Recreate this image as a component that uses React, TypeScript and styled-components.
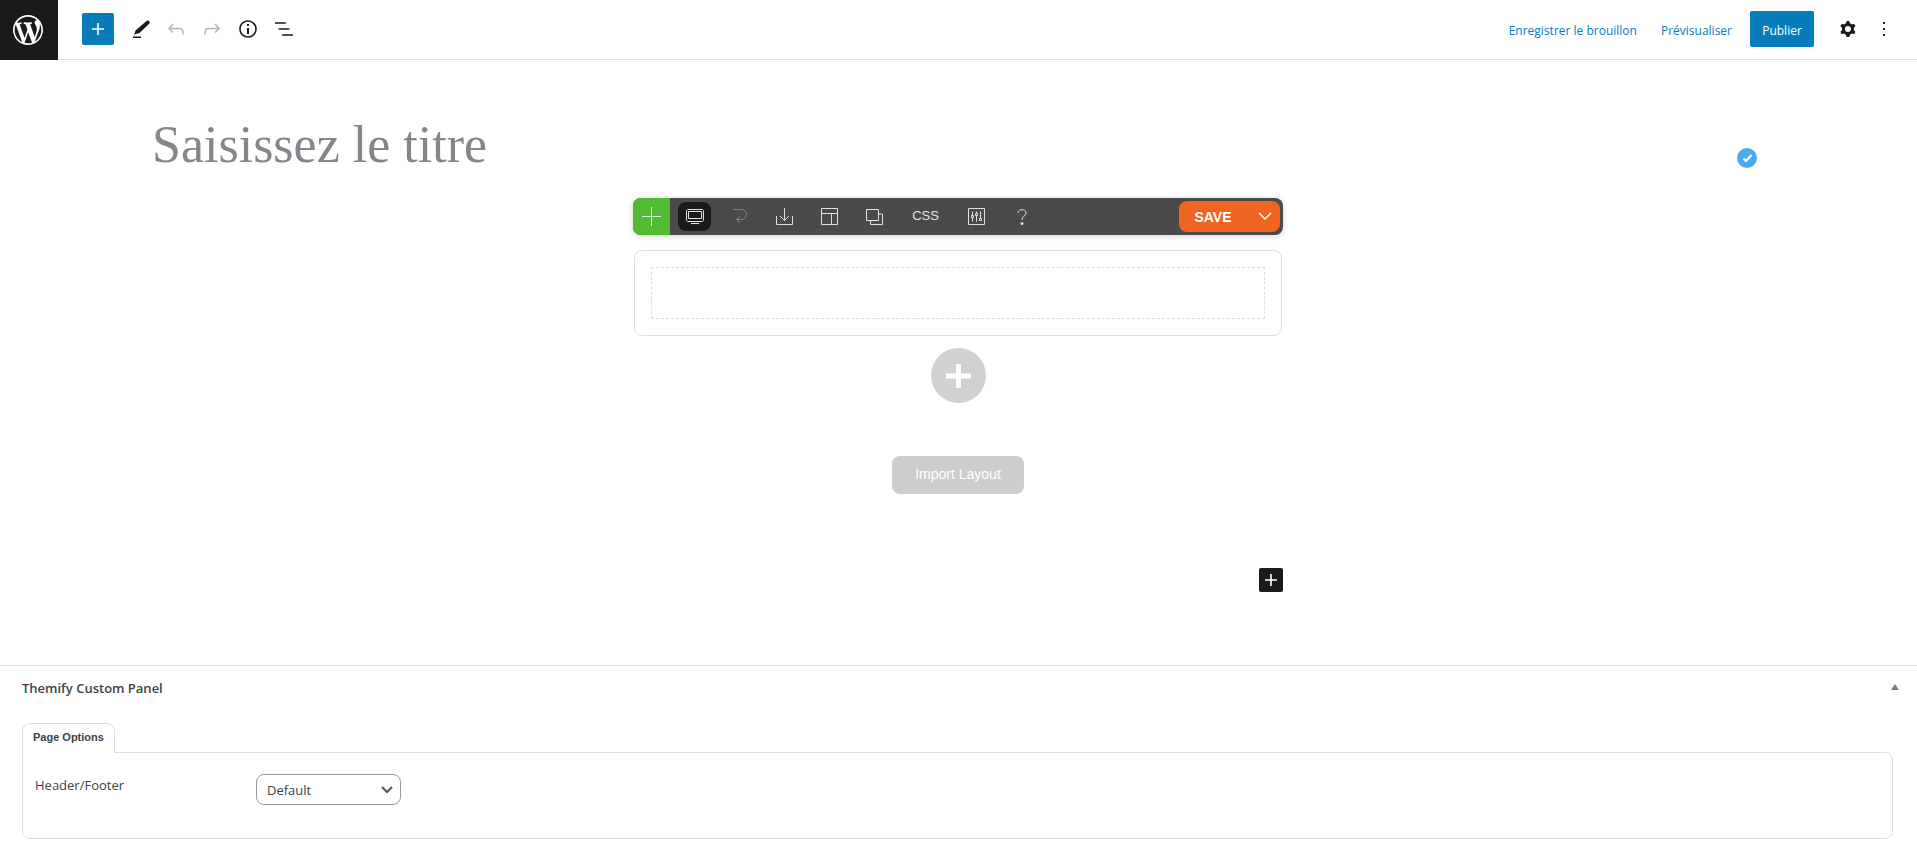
import React from "react";
import styled, { createGlobalStyle } from "styled-components";

const ui = '"Open Sans", "Noto Sans", sans-serif';
const arial = '"Liberation Sans", Arial, sans-serif';

const GlobalStyle = createGlobalStyle`
  *, *::before, *::after { box-sizing: border-box; }
  body { margin: 0; background: #fff; color: #3c434a; font-family: ${ui}; font-size: 13px; }
  button { margin: 0; padding: 0; border: 0; background: none; cursor: pointer; font: inherit; }
  svg { display: block; }
`;

const Page = styled.div`
  display: flex;
  flex-direction: column;
  min-height: 100vh;
`;

const Header = styled.header`
  display: flex;
  align-items: flex-start;
  justify-content: space-between;
  height: 60px;
  border-bottom: 1px solid #e0e0e0;
`;

const HeaderGroup = styled.div<{ $end?: boolean }>`
  display: flex;
  align-items: center;
  height: 58px;
  padding-right: ${(p) => (p.$end ? "15px" : "0")};
`;

const HomeLink = styled.a`
  display: flex;
  align-items: center;
  align-self: flex-start;
  justify-content: center;
  width: 58px;
  height: 60px;
  margin-right: 24px;
  padding-right: 2px;
  background: #1a1a1a;
  color: #fff;
`;

const InserterButton = styled.button`
  display: flex;
  align-items: center;
  justify-content: center;
  width: 32px;
  height: 32px;
  margin-right: 8px;
  border-radius: 2px;
  background: #077cba;
  color: #fff;
`;

const IconButton = styled.button`
  display: flex;
  align-items: center;
  justify-content: center;
  width: 36px;
  height: 36px;
  color: #1a1a1a;
  &:disabled { color: #b4b4b4; }
`;

const TextButton = styled.button`
  height: 36px;
  margin-right: 24px;
  padding-top: 2px;
  color: #077cba;
  font-size: 12px;
`;

const PublishButton = styled.button`
  width: 64px;
  height: 36px;
  margin: 0 16px 0 -6px;
  padding-top: 2px;
  border-radius: 2px;
  background: #077cba;
  color: #fff;
  font-size: 12px;
`;

const Editor = styled.main`
  display: flex;
  flex-direction: column;
  padding: 0 1px 73px 0;
`;

const TitleRow = styled.div`
  display: flex;
  align-items: center;
  justify-content: space-between;
  padding: 48px 159px 0 152px;
`;

const TitleInput = styled.input`
  flex: 1;
  min-width: 0;
  height: 72px;
  padding: 0;
  border: 0;
  outline: 0;
  background: none;
  color: #1e1e1e;
  font-family: "Liberation Serif", "Times New Roman", serif;
  font-size: 52px;
  &::placeholder { color: #85858b; opacity: 1; }
`;

const CheckBadge = styled.button`
  display: flex;
  align-items: center;
  justify-content: center;
  width: 20px;
  height: 20px;
  margin-top: 28px;
  border-radius: 50%;
  background: #4aaaf0;
  color: #fff;
`;

const Builder = styled.section`
  display: flex;
  flex-direction: column;
  align-items: center;
  width: 100%;
  max-width: 650px;
  margin: 18px auto 0;
`;

const Toolbar = styled.div`
  display: flex;
  align-items: center;
  justify-content: space-between;
  width: 100%;
  height: 37px;
  padding-right: 3px;
  border-radius: 8px;
  background: #4a4a4a;
  box-shadow: 0 1px 6px rgba(0, 0, 0, 0.18);
`;

const Tools = styled.div`
  display: flex;
  align-items: center;
  gap: 12px;
`;

const AddModule = styled.button`
  display: flex;
  align-items: center;
  justify-content: center;
  width: 37px;
  height: 37px;
  margin-right: -4px;
  border-radius: 8px 0 0 8px;
  background: #53ba34;
  color: #e4f3df;
`;

const Tool = styled.button<{ $active?: boolean; $wide?: boolean }>`
  display: flex;
  align-items: center;
  justify-content: center;
  width: ${(p) => (p.$wide ? "45px" : "33px")};
  height: 29px;
  padding-bottom: ${(p) => (p.$wide ? "2px" : "0")};
  border-radius: 8px;
  background: ${(p) => (p.$active ? "#1a1a1a" : "transparent")};
  color: #e0e0e0;
  font-family: ${arial};
  font-size: 13px;
  &:disabled { color: #82828a; }
`;

const SaveGroup = styled.div`
  display: flex;
  align-items: center;
  height: 31px;
  border-radius: 8px;
  background: #f16522;
  color: #fff;
`;

const SaveButton = styled.button`
  width: 68px;
  height: 31px;
  color: #fff;
  font-family: ${arial};
  font-size: 14px;
  font-weight: 700;
`;

const SaveMenu = styled.button`
  display: flex;
  align-items: center;
  justify-content: center;
  width: 33px;
  height: 31px;
  padding-left: 2px;
  color: #fff;
`;

const RowBox = styled.div`
  align-self: stretch;
  margin: 15px 1px 12px;
  padding: 16px;
  border: 1px solid #dedede;
  border-radius: 8px;
`;

const DropZone = styled.div`
  height: 52px;
  border: 1px dashed #dedede;
`;

const AddRow = styled.button`
  display: flex;
  align-items: center;
  justify-content: center;
  width: 55px;
  height: 55px;
  border-radius: 50%;
  background: #d1d1d1;
  color: #fff;
`;

const ImportButton = styled.button`
  height: 38px;
  margin: 53px 0 74px;
  padding: 0 23px 2px;
  border-radius: 8px;
  background: #cdcdcd;
  color: #fff;
  font-family: ${arial};
  font-size: 14px;
`;

const Appender = styled.button`
  display: flex;
  align-items: center;
  justify-content: center;
  align-self: flex-end;
  width: 24px;
  height: 24px;
  border-radius: 2px;
  background: #1a1a1a;
  color: #fff;
`;

const MetaBox = styled.section`
  border-top: 1px solid #e0e0e0;
  padding: 0 24px 24px 22px;
`;

const MetaHeader = styled.div`
  display: flex;
  align-items: center;
  justify-content: space-between;
  height: 44px;
  margin-right: -6px;
`;

const MetaTitle = styled.h2`
  margin: 0;
  font-size: 13px;
  font-weight: 600;
  line-height: 20px;
`;

const ToggleButton = styled.button`
  display: flex;
  padding-bottom: 2px;
  color: #787c82;
`;

const Tab = styled.button`
  display: block;
  position: relative;
  z-index: 1;
  height: 30px;
  margin: 13px 0 -1px;
  padding: 0 10px 4px;
  border: 1px solid #dedede;
  border-bottom: 0;
  border-radius: 8px 8px 0 0;
  background: #fff;
  color: #3c434a;
  font-family: ${arial};
  font-size: 11px;
  font-weight: 700;
`;

const TabPanel = styled.div`
  display: flex;
  align-items: flex-start;
  min-height: 87px;
  padding: 21px 12px;
  border: 1px solid #dedede;
  border-radius: 0 8px 8px 8px;
`;

const FieldLabel = styled.label`
  width: 221px;
  font-size: 13px;
  line-height: 22px;
`;

const SelectWrap = styled.div`
  display: grid;
  align-items: center;
  width: 145px;
  & > * { grid-area: 1 / 1; }
  & > svg { justify-self: end; margin-right: 8px; pointer-events: none; color: #555; }
`;

const Select = styled.select`
  appearance: none;
  width: 100%;
  height: 31px;
  padding: 0 24px 0 10px;
  border: 1px solid #999;
  border-radius: 8px;
  background: #fff;
  color: #3c434a;
  font-family: ${ui};
  font-size: 13px;
`;

type IconProps = { d: string; size?: number; box?: string };

const Filled = ({ d, size = 24, box = "0 0 24 24" }: IconProps) => (
  <svg width={size} height={size} viewBox={box} fill="currentColor" aria-hidden="true">
    <path fillRule="evenodd" clipRule="evenodd" d={d} />
  </svg>
);

const Line = ({ d, w = 18, h = 18, stroke = 1 }: { d: string; w?: number; h?: number; stroke?: number }) => (
  <svg width={w} height={h} viewBox={`0 0 ${w} ${h}`} fill="none" stroke="currentColor" strokeWidth={stroke} aria-hidden="true">
    <path d={d} />
  </svg>
);

const icons = {
  wordpress:
    "M20 10c0-5.51-4.49-10-10-10C4.48 0 0 4.49 0 10c0 5.52 4.48 10 10 10 5.51 0 10-4.48 10-10zM7.78 15.37L4.37 6.22c.55-.02 1.17-.08 1.17-.08.5-.06.44-1.13-.06-1.11 0 0-1.45.11-2.37.11-.18 0-.37 0-.58-.01C4.12 2.69 6.87 1.11 10 1.11c2.33 0 4.45.87 6.05 2.34-.68-.11-1.65.39-1.65 1.58 0 .74.45 1.36.9 2.1.35.61.55 1.36.55 2.46 0 1.49-1.4 5-1.4 5l-3.03-8.37c.54-.02.82-.17.82-.17.5-.05.44-1.25-.06-1.22 0 0-1.44.12-2.38.12-.87 0-2.33-.12-2.33-.12-.5-.03-.56 1.2-.06 1.22l.92.08 1.26 3.41zM17.41 10c.24-.64.74-1.87.43-4.25.7 1.29 1.05 2.71 1.05 4.25 0 3.29-1.73 6.24-4.4 7.78.97-2.59 1.94-5.2 2.92-7.78zM6.1 18.09C3.12 16.65 1.11 13.53 1.11 10c0-1.3.23-2.48.72-3.59C3.25 10.3 4.67 14.2 6.1 18.09zm4.03-6.63l2.58 6.98c-.86.29-1.76.45-2.71.45-.79 0-1.57-.11-2.29-.33.81-2.38 1.62-4.74 2.42-7.1z",
  plus: "M18 11.2h-5.2V6h-1.6v5.2H6v1.6h5.2V18h1.6v-5.2H18z",
  pencil: "M18.800 3.800Q20.200 2.800 21.300 4.200Q22.300 5.500 21.200 6.700L11.500 16L6.200 17.600L7.500 13.500ZM5 19.500H13V21H5Z",
  undo: "M18.3 11.7c-.6-.6-1.4-.9-2.3-.9H6.7l2.9-3.3-1.1-1-4.5 5L8.5 16l1-1-2.7-2.7H16c.5 0 .9.2 1.3.5 1 1 1 3.4 1 4.5v.3h1.5v-.2c0-1.5 0-4.3-1.5-5.7z",
  redo: "M15.6 6.5l-1.1 1 2.9 3.3H8c-.9 0-1.7.3-2.3.9-1.4 1.5-1.4 4.2-1.4 5.6v.2h1.5v-.3c0-1.1 0-3.5 1-4.5.3-.3.7-.5 1.3-.5h9.2L14.5 15l1.1 1.1 4.6-4.6-4.6-5z",
  info: "M12 3.2c-4.8 0-8.8 3.9-8.8 8.8 0 4.8 3.9 8.8 8.8 8.8 4.8 0 8.8-3.9 8.8-8.8 0-4.8-4-8.8-8.8-8.8zm0 16c-4 0-7.2-3.3-7.2-7.2C4.8 8 8 4.8 12 4.8s7.2 3.3 7.2 7.2c0 4-3.2 7.2-7.2 7.2zM11 17h2v-6h-2v6zm0-8h2V7h-2v2z",
  list: "M13.8 5.2H3v1.5h10.8V5.2zm-3.6 12v1.5H21v-1.500H10.200zm7.200-6H6.600v1.500h10.800v-1.500z",
  cog: "M10.289 4.836A1 1 0 0111.275 4h1.306a1 1 0 01.987.836l.244 1.466c.787.26 1.503.679 2.108 1.218l1.393-.522a1 1 0 011.216.437l.653 1.13a1 1 0 01-.23 1.273l-1.148.944a6.025 6.025 0 010 2.435l1.149.946a1 1 0 01.23 1.272l-.653 1.13a1 1 0 01-1.216.437l-1.394-.522c-.605.54-1.32.958-2.108 1.218l-.244 1.466a1 1 0 01-.987.836h-1.306a1 1 0 01-.986-.836l-.244-1.466a5.995 5.995 0 01-2.108-1.218l-1.394.522a1 1 0 01-1.217-.436l-.653-1.131a1 1 0 01.23-1.272l1.149-.946a6.026 6.026 0 010-2.435l-1.148-.944a1 1 0 01-.23-1.272l.653-1.131a1 1 0 011.217-.437l1.393.522a5.994 5.994 0 012.108-1.218l.244-1.466zM14.929 12a3 3 0 11-6 0 3 3 0 016 0z",
  more: "M13 19h-2v-2h2v2zm0-6h-2v-2h2v2zm0-6h-2V5h2v2z",
};

export default function App() {
  return (
    <Page>
      <GlobalStyle />
      <Header>
        <HeaderGroup>
          <HomeLink href="#" aria-label="WordPress">
            <Filled d={icons.wordpress} size={36} box="-2 -2 24 24" />
          </HomeLink>
          <InserterButton aria-label="Ajouter un bloc"><Filled d={icons.plus} /></InserterButton>
          <IconButton aria-label="Outils"><Filled d={icons.pencil} /></IconButton>
          <IconButton aria-label="Annuler" disabled><Filled d={icons.undo} /></IconButton>
          <IconButton aria-label="Rétablir" disabled><Filled d={icons.redo} /></IconButton>
          <IconButton aria-label="Détails"><Filled d={icons.info} /></IconButton>
          <IconButton aria-label="Vue en liste"><Filled d={icons.list} /></IconButton>
        </HeaderGroup>
        <HeaderGroup $end>
          <TextButton>Enregistrer le brouillon</TextButton>
          <TextButton>Prévisualiser</TextButton>
          <PublishButton>Publier</PublishButton>
          <IconButton aria-label="Réglages"><Filled d={icons.cog} /></IconButton>
          <IconButton aria-label="Options"><Filled d={icons.more} /></IconButton>
        </HeaderGroup>
      </Header>

      <Editor>
        <TitleRow>
          <TitleInput aria-label="Titre" placeholder="Saisissez le titre" />
          <CheckBadge aria-label="Vérifié">
            <Line d="M1.5 5.5L4 8L9.5 2" w={11} h={10} stroke={2} />
          </CheckBadge>
        </TitleRow>

        <Builder>
          <Toolbar>
            <Tools>
              <AddModule aria-label="Add module"><Line d="M9.5 0V19M0 9.5H19" w={19} h={19} /></AddModule>
              <Tool $active aria-label="Desktop">
                <Line d="M1.500 .5H16.500L17.500 1.500V11.500L16.500 12.500H1.500L.5 11.500V1.500ZM2.500 2.500H15.500V9.500H2.500ZM5 14.500H13" h={16} />
              </Tool>
              <Tool disabled aria-label="Redo"><Line d="M0 .5H8.500A4.200 4.200 0 0 1 8.500 10.500H4M7 7L3.500 10.500L7 14" w={14} h={15} /></Tool>
              <Tool aria-label="Import"><Line d="M.5 8V16.500H16.500V8M8.500 0V12.500M4 8L8.500 12.500L13 8" w={17} h={17} /></Tool>
              <Tool aria-label="Layouts"><Line d="M.5 .5H16.500V16.500H.5ZM.5 5.500H16.500M10.500 5.500V16.500" w={17} h={17} /></Tool>
              <Tool aria-label="Duplicate"><Line d="M.5 .5H12.500V11.500H.5ZM12.500 5H16.500V15.500H4.500V11.500" w={17} h={16} /></Tool>
              <Tool $wide>CSS</Tool>
              <Tool aria-label="Settings">
                <Line d="M.5 .5H16.500V16.500H.5ZM4.500 3.500V7M4.500 10V13.500M8.500 3.500V5M8.500 8V13.500M12.500 3.500V10M3.500 7.500H5.500V9.500H3.500ZM7.500 5.500H9.500V7.500H7.500ZM11.500 10.500H13.500V12.500H11.500Z" w={17} h={17} />
              </Tool>
              <Tool aria-label="Help">
                <svg width="10" height="16" viewBox="0 0 10 16" fill="none" stroke="currentColor" aria-hidden="true">
                  <path d="M1 4C1 -.5 9 -.5 9 4C9 7 5 7 5 11" />
                  <circle cx="5" cy="14.500" r="1.500" fill="currentColor" stroke="none" />
                </svg>
              </Tool>
            </Tools>
            <SaveGroup>
              <SaveButton>SAVE</SaveButton>
              <SaveMenu aria-label="Save options"><Line d="M1 1L7 7L13 1" w={14} h={9} stroke={1.4} /></SaveMenu>
            </SaveGroup>
          </Toolbar>

          <RowBox><DropZone /></RowBox>
          <AddRow aria-label="Add row"><Line d="M12.500 0V24M0 12H25" w={25} h={24} stroke={5} /></AddRow>
          <ImportButton>Import Layout</ImportButton>
          <Appender aria-label="Ajouter un bloc"><Filled d={icons.plus} /></Appender>
        </Builder>
      </Editor>

      <MetaBox>
        <MetaHeader>
          <MetaTitle>Themify Custom Panel</MetaTitle>
          <ToggleButton aria-label="Toggle panel">
            <svg width="8" height="6" viewBox="0 0 8 6" fill="currentColor" aria-hidden="true"><path d="M4 0L8 6H0Z" /></svg>
          </ToggleButton>
        </MetaHeader>
        <Tab role="tab" aria-selected="true">Page Options</Tab>
        <TabPanel role="tabpanel">
          <FieldLabel htmlFor="header-footer">Header/Footer</FieldLabel>
          <SelectWrap>
            <Select id="header-footer" defaultValue="default">
              <option value="default">Default</option>
            </Select>
            <Line d="M1 1L6 6L11 1" w={12} h={8} stroke={2} />
          </SelectWrap>
        </TabPanel>
      </MetaBox>
    </Page>
  );
}
